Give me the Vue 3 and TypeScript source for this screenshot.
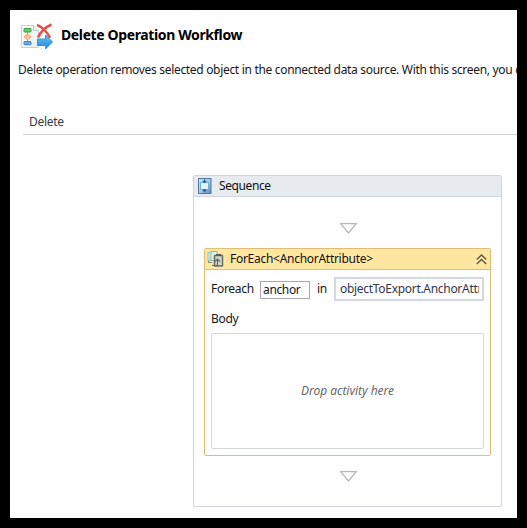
<script setup lang="ts">
const variable = 'anchor'
const expression = 'objectToExport.AnchorAttributes'
</script>

<template>
  <main class="window">
    <header class="heading">
      <svg class="workflow-icon" viewBox="0 0 34 28" width="34" height="28">
        <defs>
          <linearGradient id="arrowFill" x1="0" y1="0" x2="0" y2="1">
            <stop offset="0" stop-color="#63c4f7" />
            <stop offset="1" stop-color="#2188da" />
          </linearGradient>
          <linearGradient id="pageFill" x1="0" y1="0" x2="1" y2="1">
            <stop offset="0" stop-color="#ffffff" />
            <stop offset="1" stop-color="#e9eef1" />
          </linearGradient>
        </defs>
        <path d="M1.500 3.500H13.500L18.500 8.500V25.500H1.500Z" fill="url(#pageFill)" stroke="#ccd0d3" />
        <path d="M13.500 3.500V8.500H18.500" fill="#eef0f2" stroke="#c5c9cc" />
        <path d="M7.500 9V20" stroke="#b39a85" />
        <rect x="4" y="6.500" width="7" height="3.500" rx=".5" fill="#66cf61" stroke="#37a442" />
        <path d="M7.500 11.500L11 14.800L7.500 18L4 14.800Z" fill="#f8c29a" stroke="#eaa577" />
        <rect x="4" y="19.500" width="7" height="3.200" rx=".5" fill="#64afe8" stroke="#3a83c3" />
        <path d="M17 3C22 4.500 27.500 10 30 16M31.500 2.500C26 5 20.500 10 18 15.500" fill="none" stroke="#dd5748" stroke-width="2.500" />
        <path d="M17.500 17H25.500V13L32.500 20L25.500 27V23.500H17.500Z" fill="url(#arrowFill)" stroke="#3b91d0" />
      </svg>
      <h1>Delete Operation Workflow</h1>
    </header>
    <p class="description">Delete operation removes selected object in the connected data source. With this screen, you can</p>
    <div class="tab">Delete</div>

    <section class="sequence">
      <div class="activity-header sequence-header">
        <svg class="sequence-icon" viewBox="0 0 14 16" width="14" height="16">
          <defs>
            <linearGradient id="sequenceFill" x1="0" y1="0" x2="1" y2="1">
              <stop offset="0" stop-color="#c5e6fa" />
              <stop offset=".5" stop-color="#a3cdec" />
              <stop offset="1" stop-color="#5486ba" />
            </linearGradient>
          </defs>
          <rect x=".5" y=".5" width="12.500" height="15" fill="url(#sequenceFill)" stroke="#54779d" />
          <rect x="2.500" y="4.500" width="8" height="7" fill="#dff6fd" stroke="#75aed4" />
          <path d="M6.500 1V4M6.500 11V14" stroke="#3967a0" />
          <path d="M4 2.800H9L6.500 5.500ZM4 11.500H9L6.500 14.500Z" fill="#355f9b" />
        </svg>
        <span class="sequence-title">Sequence</span>
      </div>
      <svg class="drop-arrow first-arrow" viewBox="0 0 17 11" width="17" height="11">
        <path d="M.8.700H16.200L8.500 10Z" />
      </svg>
      <section class="foreach">
        <div class="activity-header foreach-header">
          <svg class="foreach-icon" viewBox="0 0 17 16" width="17" height="16">
            <rect x="1" y="1.500" width="5" height="8" fill="#c8ead1" stroke="#9bc5b4" />
            <rect x="4" y=".5" width="6" height="9" fill="#ddf1e7" stroke="#91b9b0" />
            <path d="M1.500 10V11.500H5" fill="none" stroke="#748c7d" />
            <rect x="7.500" y="4.500" width="8" height="10.500" rx=".5" fill="#d4d6cc" stroke="#666c69" stroke-width="1.500" />
            <path d="M9 4H14" stroke="#555d5a" stroke-width="2" />
            <path d="M5 14.500H10.500V8.500M8 10.500L10.500 8L13 10.500" fill="none" stroke="#5b6767" stroke-width="1.100" />
          </svg>
          <span class="foreach-title">ForEach&lt;AnchorAttribute&gt;</span>
          <svg class="collapse" viewBox="0 0 11 11" width="11" height="11">
            <path d="M.8 5.500L5.500 1L10.200 5.500M.8 10L5.500 5.500L10.200 10" />
          </svg>
        </div>
        <div class="expression-row">
          <span class="each">Foreach</span>
          <div class="variable"><span>{{ variable }}</span></div>
          <span class="in">in</span>
          <div class="expression"><div class="clip">{{ expression }}</div></div>
        </div>
        <div class="body-label">Body</div>
        <div class="drop-zone"><span>Drop activity here</span></div>
      </section>
      <svg class="drop-arrow second-arrow" viewBox="0 0 17 11" width="17" height="11">
        <path d="M.8.700H16.200L8.500 10Z" />
      </svg>
    </section>
  </main>
</template>

<style>
body { margin: 0; background: #000; overflow: hidden; }
</style>

<style scoped>
* { box-sizing: border-box; }
.window {
  width: 527px; height: 528px; border: 10px solid #000;
  overflow: hidden; background: #fefefe; color: #171717;
  font: 12px/16px "Noto Sans", "Open Sans", sans-serif;
  letter-spacing: -.28px; white-space: nowrap;
}
svg { display: block; flex: none; }
.heading { height: 42px; display: flex; padding: 12px 0 0 10px; }
h1 { margin: 3px 0 0 7px; font: bold 14px/20px "Noto Sans", sans-serif; letter-spacing: -.38px; color: #000; }
.description { margin: 10px 0 0 8px; height: 16px; letter-spacing: -.315px; }
.tab { margin: 36px 0 0 13px; height: 21px; padding-left: 6px; border-bottom: 1px solid #d2d4d6; color: #35394b; }
.sequence { width: 309px; height: 332px; margin: 40px 0 0 183px; border: 1px solid #d0d4dc; border-radius: 2px; }
.activity-header { display: flex; border-bottom: 1px solid; color: #111; }
.sequence-header { height: 21px; background: #e7eaee; border-color: #d0d4dc; padding: 2px 0 0 4px; }
.sequence-title { margin-left: 7px; line-height: 15px; letter-spacing: -.4px; }
.drop-arrow { margin-left: 146px; fill: #fff; stroke: #b4b7c0; stroke-width: 1.2; }
.first-arrow { margin-top: 26px; }
.foreach { width: 287px; height: 208px; margin: 14px 0 0 10px; border: 1px solid #e0bd73; border-radius: 2px; }
.foreach-header { height: 21px; background: #ffe6a1; border-color: #e0bd73; padding: 2px 0 0 2px; }
.foreach-title { margin-left: 6px; line-height: 15px; }
.collapse { margin: 3px 3px 0 auto; fill: none; stroke: #5a5344; stroke-width: 1.3; }
.expression-row { height: 31px; padding: 7px 0 0 6px; display: flex; align-items: flex-start; }
.each { width: 49px; line-height: 24px; }
.variable { width: 50px; height: 18px; margin-top: 4px; padding-left: 2px; border: 1px solid #a6a8ae; line-height: 16px; letter-spacing: -.35px; }
.in { width: 24px; padding-left: 7px; line-height: 24px; }
.expression { width: 150px; height: 24px; border: 2px solid #d5d7e2; padding: 0 3px 0 4px; line-height: 20px; color: #32364b; letter-spacing: -.3px; }
.clip { overflow: hidden; }
.body-label { height: 16px; margin: 10px 0 0 6px; }
.drop-zone { width: 273px; height: 116px; margin: 6px 0 0 6px; border: 1px solid #d5d8df; border-radius: 2px; display: grid; place-items: center; font-style: italic; color: #68696b; letter-spacing: -.03px; }
.second-arrow { margin-top: 15px; }
</style>
